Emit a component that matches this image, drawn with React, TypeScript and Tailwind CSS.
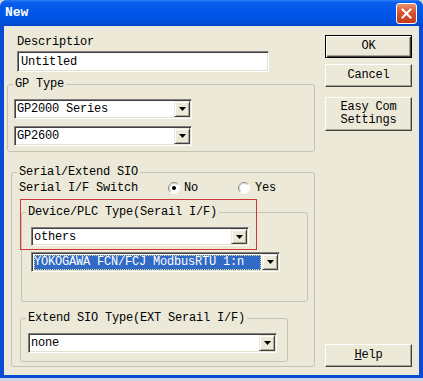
import React from 'react';

const sunken =
  'border border-t-[#808080] border-l-[#808080] border-b-white border-r-white shadow-[inset_1px_1px_0_#404040,inset_-1px_-1px_0_#e3e0d0]';

const Arrow = () => (
  <div className="w-[16px] shrink-0 flex items-center justify-center bg-[#ece9d8] border border-t-[#ece9d8] border-l-[#ece9d8] border-b-[#404040] border-r-[#404040] shadow-[inset_1px_1px_0_#fff,inset_-1px_-1px_0_#aca899]">
    <svg width="7" height="4" viewBox="0 0 7 4">
      <path d="M0 0H7L3.5 4Z" fill="#000" />
    </svg>
  </div>
);

const Combo = ({ text, className, selected }: { text: string; className: string; selected?: boolean }) => (
  <div className={`flex bg-white p-[1px] ${sunken} ${className}`}>
    <div className="flex-1 flex items-center overflow-hidden whitespace-nowrap">
      {selected ? (
        <span className="flex-1 ml-[1px] mr-[1px] h-[15px] flex items-center bg-[#316ac5] text-white outline outline-1 outline-dotted outline-[#e0d890] -outline-offset-1">
          {text}
        </span>
      ) : (
        <span className="pl-[1px]">{text}</span>
      )}
    </div>
    <Arrow />
  </div>
);

const Radio = ({ checked }: { checked?: boolean }) => (
  <svg width="12" height="12" viewBox="0 0 12 12" className="shrink-0">
    <circle cx="6" cy="6" r="5.5" fill="#fff" stroke="#fff" />
    <path d="M2.1 9.9A5.5 5.5 0 0 1 9.9 2.1" fill="none" stroke="#8c8a80" />
    <path d="M2.8 9.2A4.5 4.5 0 0 1 9.2 2.8" fill="none" stroke="#d4d0c8" />
    {checked && <circle cx="6" cy="6" r="2" fill="#000" />}
  </svg>
);

const Button = ({ children, className, primary }: { children: React.ReactNode; className: string; primary?: boolean }) => (
  <div
    className={`w-[87px] flex flex-col items-center justify-center bg-[#ece9d8] leading-[13px] ${
      primary
        ? 'border border-black shadow-[inset_1px_1px_0_#fff,inset_-1px_-1px_0_#404040,inset_-2px_-2px_0_#aca899]'
        : 'border border-t-white border-l-white border-b-[#404040] border-r-[#404040] shadow-[inset_-1px_-1px_0_#aca899]'
    } ${className}`}
  >
    {children}
  </div>
);

export default function App() {
  return (
    <div className="w-[423px] h-[381px] bg-[#cfd6e3] font-['Liberation_Mono',monospace] text-[12px] tracking-[-0.2px] leading-[14px] text-black">
      <div className="h-[378px] flex flex-col rounded-t-[7px] overflow-hidden bg-[#0a4ad4]">
        {/* title bar */}
        <div className="h-[26px] shrink-0 flex items-center pl-[5px] bg-[linear-gradient(to_bottom,#2a7ef2_0%,#0a5ded_10%,#0056e8_50%,#0051df_85%,#0044c8_100%)]">
          <span className="text-white font-bold text-[13px] tracking-normal">New</span>
          <div className="ml-auto mr-[6px] w-[21px] h-[21px] rounded-[3px] border border-white flex items-center justify-center bg-[linear-gradient(to_bottom,#e98e72,#d9532f_45%,#c23a17)]">
            <svg width="11" height="11" viewBox="0 0 11 11">
              <path d="M1.5 1.5L9.5 9.5M9.5 1.5L1.5 9.5" stroke="#fff" strokeWidth="2" strokeLinecap="square" />
            </svg>
          </div>
        </div>

        {/* body */}
        <div className="relative flex-1 mx-[4px] mb-[3px] bg-[#ece9d8] flex">
          <div className="w-[321px] shrink-0 flex flex-col items-start">
            <div className="mt-[9px] ml-[13px]">Descriptior</div>
            <div className={`ml-[13px] mt-[2px] w-[252px] h-[21px] bg-white flex items-center pl-[3px] ${sunken}`}>Untitled</div>

            <fieldset className="mt-[5px] ml-[3px] w-[308px] pb-[5px] border border-[#c5c3b4] rounded-[3px]">
              <legend className="ml-[5px] px-[2px]">GP Type</legend>
              <Combo text="GP2000 Series" className="mt-[8px] ml-[6px] w-[178px] h-[20px]" />
              <Combo text="GP2600" className="mt-[7px] ml-[6px] w-[178px] h-[20px]" />
            </fieldset>

            <fieldset className="mt-[13px] ml-[7px] w-[304px] pb-[4px] border border-[#c5c3b4] rounded-[3px]">
              <legend className="ml-[5px] px-[2px]">Serial/Extend SIO</legend>
              <div className="mt-[2px] ml-[7px] h-[14px] flex items-center">
                <span className="w-[149px]">Serial I/F Switch</span>
                <span className="w-[70px] flex items-center">
                  <Radio checked />
                  <span className="ml-[4px]">No</span>
                </span>
                <span className="flex items-center">
                  <Radio />
                  <span className="ml-[5px]">Yes</span>
                </span>
              </div>

              <fieldset className="mt-[10px] ml-[9px] w-[287px] pb-[29px] border border-[#c5c3b4] rounded-[3px]">
                <legend className="ml-[4px] px-[2px]">Device/PLC Type(Serail I/F)</legend>
                <Combo text="others" className="mt-[8px] ml-[9px] w-[218px] h-[19px]" />
                <Combo text="YOKOGAWA FCN/FCJ ModbusRTU 1:n" className="mt-[6px] ml-[9px] w-[249px] h-[20px]" selected />
              </fieldset>

              <fieldset className="mt-[9px] ml-[8px] w-[268px] pb-[8px] border border-[#c5c3b4] rounded-[3px]">
                <legend className="ml-[5px] px-[2px]">Extend SIO Type(EXT Serail I/F)</legend>
                <Combo text="none" className="mt-[8px] ml-[7px] w-[249px] h-[20px]" />
              </fieldset>
            </fieldset>
          </div>

          <div className="flex flex-col pb-[8px]">
            <Button primary className="mt-[9px] h-[23px]">OK</Button>
            <Button className="mt-[6px] h-[23px]">Cancel</Button>
            <Button className="mt-[10px] h-[34px]">
              <span>Easy Com</span>
              <span>Settings</span>
            </Button>
            <Button className="mt-auto h-[23px]">
              <span>
                <span className="underline">H</span>elp
              </span>
            </Button>
          </div>

          {/* red highlight annotation */}
          <div className="absolute left-[16px] top-[173px] w-[237px] h-[51px] border border-[#d3343c] pointer-events-none" />
        </div>
      </div>
    </div>
  );
}
